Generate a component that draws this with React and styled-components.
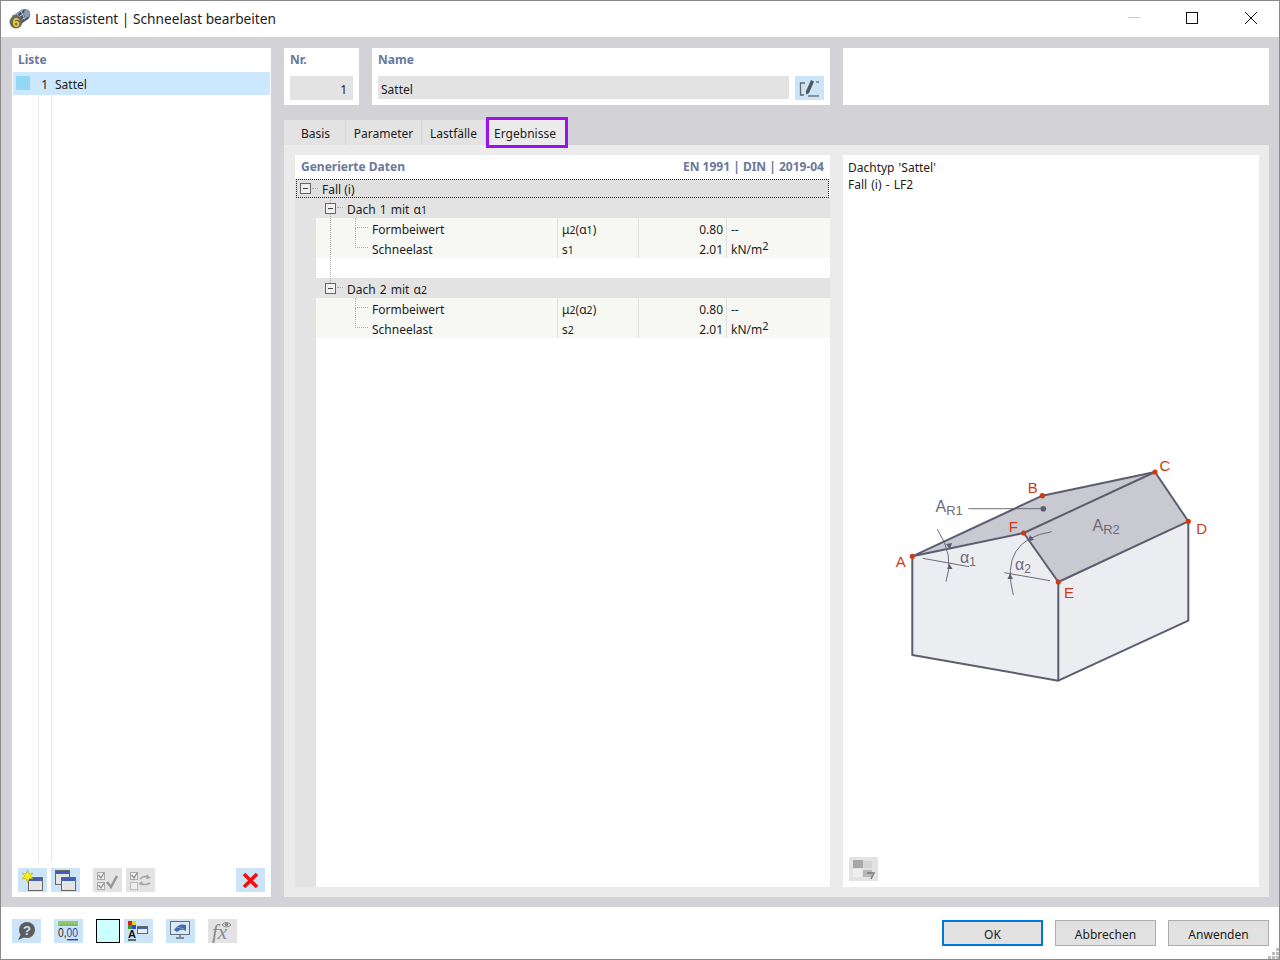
import React from 'react';
import styled, { createGlobalStyle } from 'styled-components';

const GlobalStyle = createGlobalStyle`
    html, body {
        margin: 0;
        padding: 0;
        background: #fff;
    }
    body {
        font-family: 'Noto Sans', 'Liberation Sans', sans-serif;
        font-size: 12px;
        color: #1c1c1c;
    }
`;

const HEADING = '#69789b';
const BLUE_BTN = '#cce4f7';
const GREY_BTN = '#e3e3e3';

const Small = styled.span`
    font-size: 10.5px;
`;

const Sup = styled.sup`
    font-size: 11px;
    line-height: 0;
    vertical-align: 4px;
`;

function TitleIcon() {
    return (
        <svg width="22" height="22" viewBox="0 0 22 22">
            <path d="M3 8 L13 1.5 Q19 0 21 4.5 Q22 9 18.5 11.5 L9 18 Z" fill="#46536a" />
            <path d="M5 7.5 L14 2 M7 10.5 L17 4.500 M9.500 13.500 L19.500 7.500 M8 5.500 L12 14 M12 3 L16 11.500" stroke="#b5c3d4" strokeWidth="1" fill="none" />
            <ellipse cx="18" cy="5.500" rx="3" ry="4" fill="#8e9cb0" />
            <circle cx="7" cy="14" r="6.500" fill="#6b6a55" />
            <text x="7" y="18.500" fontSize="12.500" fontWeight="700" textAnchor="middle" fill="#f1cc3c" fontFamily="Liberation Sans">6</text>
        </svg>
    );
}

function StarWindowIcon() {
    return (
        <svg width="29" height="24" viewBox="0 0 29 24">
            <rect x="10.5" y="9.5" width="14" height="13" fill="#e4e4e4" stroke="#666" />
            <rect x="11" y="10" width="13" height="3" fill="#3f5fb0" />
            <path d="M9.5 2 L11 6 L15 5 L12.5 8 L15 11 L11.5 10.5 L9.5 14.5 L8 10.5 L4 11 L7 8 L4 5 L8 6 Z" fill="#f5ee1e" stroke="#a8a000" strokeWidth="0.5" />
        </svg>
    );
}

function WindowsIcon() {
    return (
        <svg width="29" height="24" viewBox="0 0 29 24">
            <rect x="4.5" y="2.5" width="14" height="14" fill="#e4e4e4" stroke="#666" />
            <rect x="5" y="3" width="13" height="3" fill="#3f5fb0" />
            <rect x="10.5" y="9.5" width="14" height="13" fill="#e4e4e4" stroke="#666" />
            <rect x="11" y="10" width="13" height="3" fill="#3f5fb0" />
        </svg>
    );
}

function CheckAllIcon() {
    return (
        <svg width="29" height="24" viewBox="0 0 29 24">
            <rect x="4.5" y="4.5" width="7" height="7" fill="#eee" stroke="#aaa" />
            <rect x="4.5" y="14.5" width="7" height="7" fill="#eee" stroke="#aaa" />
            <path d="M5.5 7 L8 10 L11 5 M5.5 17 L8 20 L11 15" stroke="#8a8a8a" strokeWidth="1.2" fill="none" />
            <path d="M14 14 L18 19 L24 8" stroke="#999" strokeWidth="2.6" fill="none" />
        </svg>
    );
}

function CheckSwapIcon() {
    return (
        <svg width="29" height="24" viewBox="0 0 29 24">
            <rect x="4.5" y="4.5" width="7" height="7" fill="#eee" stroke="#aaa" />
            <rect x="4.5" y="14.5" width="7" height="7" fill="#eee" stroke="#bbb" />
            <path d="M5.5 7 L8 10 L11 5" stroke="#8a8a8a" strokeWidth="1.2" fill="none" />
            <path d="M14 11 Q18 7 23 9 M14 15 Q19 18 24 15" stroke="#a5a5a5" strokeWidth="1.6" fill="none" />
            <path d="M21 6.5 L25 10 L20 11 Z M16 13 L12.500 16 L17 17.500 Z" fill="#a5a5a5" />
        </svg>
    );
}

function DeleteIcon() {
    return (
        <svg width="29" height="24" viewBox="0 0 29 24">
            <path d="M8 6 L21 19 M21 6 L8 19" stroke="#f40f0f" strokeWidth="3.6" fill="none" />
        </svg>
    );
}

function HelpIcon() {
    return (
        <svg width="29" height="24" viewBox="0 0 29 24">
            <circle cx="15" cy="11" r="8" fill="#5c5c5c" />
            <path d="M9 15 L6 21 L13 18 Z" fill="#5c5c5c" />
            <text x="15" y="15.5" fontSize="13" fontWeight="700" textAnchor="middle" fill="#cce4f7" fontFamily="Liberation Sans">?</text>
        </svg>
    );
}

function DecimalsIcon() {
    return (
        <svg width="29" height="24" viewBox="0 0 29 24">
            <rect x="4" y="2" width="20" height="5" fill="#8fc76a" />
            <path d="M7 5v2 M10 5v2 M13 5v2 M16 5v2 M19 5v2 M22 5v2" stroke="#5c8f3f" strokeWidth="0.7" />
            <text x="4" y="18" fontSize="12" fontFamily="Liberation Sans" fill="#222" textLength="20" lengthAdjust="spacingAndGlyphs">0,<tspan fill="#2b46a6">00</tspan></text>
            <rect x="13" y="20" width="11" height="1.4" fill="#2b46a6" />
        </svg>
    );
}

function ColorFontIcon() {
    return (
        <svg width="29" height="24" viewBox="0 0 29 24">
            <rect x="4" y="2" width="4" height="4" fill="#e21c1c" />
            <rect x="8" y="2" width="4" height="4" fill="#e8d81a" />
            <rect x="4" y="6" width="4" height="4" fill="#2ca02c" />
            <rect x="8" y="6" width="4" height="4" fill="#2050d0" />
            <text x="4" y="19" fontSize="11" fontWeight="700" fontFamily="Liberation Sans" fill="#111">A</text>
            <rect x="4" y="20" width="8" height="2" fill="#666" />
            <rect x="13.5" y="7.5" width="10" height="7" fill="#eee" stroke="#666" />
            <rect x="14" y="8" width="9" height="2" fill="#3f5fb0" />
        </svg>
    );
}

function MonitorIcon() {
    return (
        <svg width="29" height="24" viewBox="0 0 29 24">
            <rect x="4.5" y="2.5" width="19" height="13" fill="#dce8f2" stroke="#5f6f7f" />
            <path d="M8 11 Q13 4 20 6 L20 12 Q15 9 11 13 Z" fill="#3d6db0" />
            <path d="M11 8 L18 10" stroke="#8db0d8" strokeWidth="0.8" />
            <path d="M14 16v2 M10 19h8" stroke="#5f6f7f" strokeWidth="1.4" />
        </svg>
    );
}

function FormulaIcon() {
    return (
        <svg width="29" height="24" viewBox="0 0 29 24">
            <text x="4" y="20" fontSize="21" fontStyle="italic" fontFamily="Liberation Serif" fill="#8a8a8a">fx</text>
            <path d="M14 6 Q18.5 1 23 6 Q18.5 10 14 6 Z" fill="none" stroke="#8a8a8a" />
            <circle cx="18.5" cy="5.5" r="1.8" fill="#8a8a8a" />
        </svg>
    );
}

function PenIcon() {
    return (
        <svg width="29" height="24" viewBox="0 0 29 24">
            <path d="M10 7 H5.5 V19 H9" stroke="#666" strokeWidth="1.3" fill="none" />
            <path d="M13 20 H24" stroke="#666" strokeWidth="1.3" />
            <path d="M16 4 L19 5.5 L14 17 L11 18.5 L11 15 Z" fill="#555" />
            <path d="M21 6 H24" stroke="#666" strokeWidth="1.3" />
        </svg>
    );
}

function PreviewIcon() {
    return (
        <svg width="29" height="24" viewBox="0 0 29 24">
            <rect x="4" y="3" width="10" height="8" fill="#a8a8a8" />
            <rect x="14" y="4" width="9" height="7" fill="#d4d4d4" />
            <rect x="4" y="12" width="9" height="8" fill="#efefef" />
            <rect x="14" y="13" width="9" height="7" fill="#b8b8b8" />
            <path d="M18 16 L25 16 L22 22" stroke="#777" strokeWidth="1.4" fill="none" />
        </svg>
    );
}

function Sketch() {
    return (
        <svg width="340" height="245" viewBox="880 450 340 245">
            <path d="M912.3 556.3 L1023.7 533 L1058.3 582 V680.7 L912.3 655 Z" fill="#ecedf0" />
            <path d="M1058.3 582 L1188.3 521.3 V620.7 L1058.3 680.7 Z" fill="#ecedf0" />
            <path d="M912.3 556.3 L1042.3 495.7 L1155 472 L1023.7 533 Z" fill="#c9c9d1" />
            <path d="M1023.7 533 L1155 472 L1188.3 521.3 L1058.3 582 Z" fill="#c9c9d1" />
            <g stroke="#5d5d6f" strokeWidth="2" fill="none" strokeLinejoin="round">
                <path d="M912.3 556.3 L1042.3 495.7 L1155 472 L1188.3 521.3 L1058.3 582 L1023.7 533 L912.3 556.3" />
                <path d="M1023.7 533 L1155 472" />
                <path d="M912.3 556.3 V655 L1058.3 680.7 L1188.3 620.7 V521.3" />
                <path d="M1058.3 582 V680.7" />
            </g>
            <g stroke="#5d5d6f" strokeWidth="0.9" fill="none">
                <path d="M968.3 508.7 H1043.3" />
                <path d="M922.7 558.3 L969 566.7" />
                <path d="M1004.3 572.7 L1050 580.7" />
                <path d="M937.3 529.3 Q955 556 946 581.7" />
                <path d="M1051.7 531.7 Q999 540 1013.3 595" />
            </g>
            <g fill="#5d5d6f">
                <circle cx="1043.3" cy="508.7" r="2.8" />
                <path d="M946 544 L952 543 L950 549.5 Z" />
                <path d="M949.5 564 L947 569 L952.5 569 Z" />
                <path d="M1030 535 L1034 540 L1028 541 Z" />
                <path d="M1010 573.5 L1007.5 579 L1013 579 Z" />
            </g>
            <g fill="#cf3a10">
                <circle cx="912.3" cy="556.3" r="2.6" />
                <circle cx="1042.3" cy="495.7" r="2.6" />
                <circle cx="1155" cy="472" r="2.6" />
                <circle cx="1188.3" cy="521.3" r="2.6" />
                <circle cx="1058.3" cy="582" r="2.6" />
                <circle cx="1023.7" cy="533" r="2.6" />
            </g>
            <g fill="#cf3a10" fontFamily="Liberation Sans" fontSize="15" textAnchor="middle">
                <text x="900.7" y="567.3">A</text>
                <text x="1032.7" y="492.6">B</text>
                <text x="1165" y="471.3">C</text>
                <text x="1201.7" y="533.5">D</text>
                <text x="1069" y="598.2">E</text>
                <text x="1013.3" y="532.2">F</text>
            </g>
            <g fill="#6b6b7a" fontFamily="Liberation Sans" fontSize="16">
                <text x="935.5" y="512">A<tspan fontSize="13" dy="3">R1</tspan></text>
                <text x="1092.5" y="530.5">A<tspan fontSize="13" dy="3">R2</tspan></text>
                <text x="960" y="563">α<tspan fontSize="12" dy="3">1</tspan></text>
                <text x="1015" y="570">α<tspan fontSize="12" dy="3">2</tspan></text>
            </g>
        </svg>
    );
}

const results = [
    {
        id: 1,
        name: 'Dach 1 mit ',
        index: '1',
        rows: [
            { label: 'Formbeiwert', symbol: <>μ<Small>2</Small>(α<Small>1</Small>)</>, value: '0.80', unit: '--' },
            { label: 'Schneelast', symbol: <>s<Small>1</Small></>, value: '2.01', unit: <>kN/m<Sup>2</Sup></> },
        ],
    },
    {
        id: 2,
        name: 'Dach 2 mit ',
        index: '2',
        rows: [
            { label: 'Formbeiwert', symbol: <>μ<Small>2</Small>(α<Small>2</Small>)</>, value: '0.80', unit: '--' },
            { label: 'Schneelast', symbol: <>s<Small>2</Small></>, value: '2.01', unit: <>kN/m<Sup>2</Sup></> },
        ],
    },
];

function App() {
    return (
        <>
            <GlobalStyle />
            <Dialog>
                <TitleBar>
                    <TitleLogo><TitleIcon /></TitleLogo>
                    <TitleText>Lastassistent | Schneelast bearbeiten</TitleText>
                    <WinButton>
                        <svg width="12" height="12" viewBox="0 0 12 12"><path d="M0 5.5 H12" stroke="#c8c8c8" /></svg>
                    </WinButton>
                    <WinButton>
                        <svg width="12" height="12" viewBox="0 0 12 12"><rect x="0.5" y="0.5" width="11" height="11" fill="none" stroke="#111" /></svg>
                    </WinButton>
                    <WinButton>
                        <svg width="12" height="12" viewBox="0 0 12 12"><path d="M0 0 L12 12 M12 0 L0 12" stroke="#111" /></svg>
                    </WinButton>
                </TitleBar>

                <Main>
                    <ListPanel>
                        <ListTitle>Liste</ListTitle>
                        <ListBody>
                            <ListRow>
                                <Swatch />
                                <ListNumber>1</ListNumber>
                                <ListName>Sattel</ListName>
                            </ListRow>
                        </ListBody>
                        <ListToolbar>
                            <IconBtn $bg={BLUE_BTN}><StarWindowIcon /></IconBtn>
                            <IconBtn $bg={BLUE_BTN}><WindowsIcon /></IconBtn>
                            <IconBtn $bg={GREY_BTN} $ml="9px"><CheckAllIcon /></IconBtn>
                            <IconBtn $bg={GREY_BTN}><CheckSwapIcon /></IconBtn>
                            <IconBtn $bg={BLUE_BTN} $ml="auto"><DeleteIcon /></IconBtn>
                        </ListToolbar>
                    </ListPanel>

                    <RightColumn>
                        <TopRow>
                            <FieldPanel $width="75px">
                                <FieldLabel>Nr.</FieldLabel>
                                <FieldValue $align="right">1</FieldValue>
                            </FieldPanel>
                            <FieldPanel $width="458px">
                                <FieldLabel>Name</FieldLabel>
                                <NameLine>
                                    <FieldValue $short>Sattel</FieldValue>
                                    <IconBtn $bg={BLUE_BTN}><PenIcon /></IconBtn>
                                </NameLine>
                            </FieldPanel>
                            <BlankPanel />
                        </TopRow>

                        <Tabs>
                            <Tab $width="61px" $pl="2px">Basis</Tab>
                            <Tab $width="75px">Parameter</Tab>
                            <Tab $width="63px">Lastfälle</Tab>
                            <Tab $width="76px" $active>Ergebnisse</Tab>
                        </Tabs>

                        <TabPage>
                            <TreePanel>
                                <TreeHeader>
                                    <span>Generierte Daten</span>
                                    <span>EN 1991 | DIN | 2019-04</span>
                                </TreeHeader>
                                <TreeBody>
                                    <CaseRow>
                                        <Expander $left="3px" />
                                        <Dash $left="15px" />
                                        <CaseLabel>Fall (i)</CaseLabel>
                                    </CaseRow>
                                    {results.map((group, i) => (
                                        <Group key={group.id} $spaced={i > 0}>
                                            <RoofRow $stem={i === 0}>
                                                <Expander $left="30px" />
                                                <Dash $left="42px" />
                                                <RoofLabel>{group.name}α<Small>{group.index}</Small></RoofLabel>
                                            </RoofRow>
                                            {group.rows.map((row, j) => (
                                                <ValueRow key={row.label} $last={j === 1}>
                                                    <ValueName>{row.label}</ValueName>
                                                    <ValueCell>{row.symbol}</ValueCell>
                                                    <ValueCell $number>{row.value}</ValueCell>
                                                    <UnitCell>{row.unit}</UnitCell>
                                                </ValueRow>
                                            ))}
                                        </Group>
                                    ))}
                                </TreeBody>
                            </TreePanel>

                            <SketchPanel>
                                <SketchText>Dachtyp 'Sattel'<br />Fall (i) - LF2</SketchText>
                                <SketchFrame><Sketch /></SketchFrame>
                                <PreviewBtn $bg={GREY_BTN}><PreviewIcon /></PreviewBtn>
                            </SketchPanel>
                        </TabPage>
                    </RightColumn>
                </Main>

                <Footer>
                    <IconBtn $bg={BLUE_BTN}><HelpIcon /></IconBtn>
                    <IconBtn $bg={BLUE_BTN} $ml="9px"><DecimalsIcon /></IconBtn>
                    <ColorSquare />
                    <IconBtn $bg={BLUE_BTN}><ColorFontIcon /></IconBtn>
                    <IconBtn $bg={BLUE_BTN} $ml="9px"><MonitorIcon /></IconBtn>
                    <IconBtn $bg={GREY_BTN} $ml="9px"><FormulaIcon /></IconBtn>
                    <DialogButtons>
                        <DialogButton $primary>OK</DialogButton>
                        <DialogButton>Abbrechen</DialogButton>
                        <DialogButton>Anwenden</DialogButton>
                    </DialogButtons>
                    <Grip>
                        <svg width="12" height="12" viewBox="0 0 12 12" fill="#bdbdbd">
                            <rect x="8" y="0" width="3" height="3" />
                            <rect x="4" y="4" width="3" height="3" />
                            <rect x="8" y="4" width="3" height="3" />
                            <rect x="0" y="8" width="3" height="3" />
                            <rect x="4" y="8" width="3" height="3" />
                            <rect x="8" y="8" width="3" height="3" />
                        </svg>
                    </Grip>
                </Footer>
            </Dialog>
        </>
    );
}

const Dialog = styled.div`
    width: 1280px;
    height: 960px;
    box-sizing: border-box;
    border: 1px solid #8a8a8a;
    display: flex;
    flex-direction: column;
    overflow: hidden;
`;

const TitleBar = styled.div`
    height: 36px;
    box-sizing: border-box;
    flex: none;
    display: flex;
    align-items: center;
    padding: 0 0 2px 8px;
    background: #fff;
`;

const TitleLogo = styled.div`
    width: 22px;
    height: 22px;
    margin-right: 4px;
    margin-top: 2px;
`;

const TitleText = styled.div`
    flex: 1;
    font-size: 13.7px;
`;

const WinButton = styled.div`
    width: 58px;
    height: 34px;
    box-sizing: border-box;
    display: flex;
    align-items: center;
    justify-content: center;
    &:last-child {
        padding-left: 2px;
    }
`;

const Main = styled.div`
    flex: 1;
    min-height: 0;
    display: grid;
    grid-template-columns: 259px 985px;
    column-gap: 13px;
    padding: 11px 10px 10px 11px;
    background: #d2d2d7;
`;

const ListPanel = styled.div`
    background: #fff;
    padding: 0 1px;
    display: flex;
    flex-direction: column;
    min-height: 0;
`;

const ListTitle = styled.div`
    height: 24px;
    line-height: 23px;
    padding-left: 5px;
    font-weight: 700;
    color: ${HEADING};
`;

const ListBody = styled.div`
    flex: 1;
    background:
        linear-gradient(#e8e8e8, #e8e8e8) 25px 0 / 1px 100% no-repeat,
        linear-gradient(#e8e8e8, #e8e8e8) 38px 0 / 1px 100% no-repeat;
`;

const ListRow = styled.div`
    height: 23px;
    display: flex;
    align-items: flex-start;
    background: #cce8ff;
    padding-left: 3px;
    line-height: 25px;
`;

const Swatch = styled.div`
    width: 14px;
    height: 14px;
    margin-top: 4px;
    background: #93d7f7;
`;

const ListNumber = styled.span`
    width: 18px;
    margin-right: 7px;
    text-align: right;
`;

const ListName = styled.span`
    display: block;
`;

const ListToolbar = styled.div`
    flex: none;
    display: flex;
    gap: 4px;
    padding: 6px 5px 5px;
`;

const IconBtn = styled.div`
    width: 29px;
    height: 24px;
    flex: none;
    background: ${props => props.$bg};
    margin-left: ${props => props.$ml || '0'};
    svg {
        display: block;
    }
`;

const RightColumn = styled.div`
    display: flex;
    flex-direction: column;
    min-height: 0;
`;

const TopRow = styled.div`
    height: 57px;
    flex: none;
    display: flex;
    gap: 13px;
`;

const FieldPanel = styled.div`
    width: ${props => props.$width};
    box-sizing: border-box;
    flex: none;
    background: #fff;
    padding: 0 6px;
`;

const FieldLabel = styled.div`
    height: 28px;
    line-height: 23px;
    font-weight: 700;
    color: ${HEADING};
`;

const FieldValue = styled.div`
    height: ${props => props.$short ? '23px' : '24px'};
    line-height: 28px;
    padding: 0 6px 0 3px;
    background: #e3e3e3;
    text-align: ${props => props.$align || 'left'};
    flex: ${props => props.$short ? 1 : 'none'};
`;

const NameLine = styled.div`
    display: flex;
    gap: 6px;
`;

const BlankPanel = styled.div`
    flex: 1;
    background: #fff;
`;

const Tabs = styled.div`
    height: 25px;
    flex: none;
    margin-top: 15px;
    display: flex;
    gap: 1px;
`;

const Tab = styled.div`
    position: relative;
    width: ${props => props.$width};
    box-sizing: border-box;
    text-align: center;
    line-height: 28px;
    padding-left: ${props => props.$pl || '0'};
    padding-right: ${props => props.$active ? '4px' : '0'};
    margin-left: ${props => props.$active ? '3px' : '0'};
    background: ${props => props.$active ? '#ebebeb' : '#e3e3e3'};
    outline: ${props => props.$active ? '3px solid #9a12ee' : 'none'};
    z-index: ${props => props.$active ? 1 : 0};
`;

const TabPage = styled.div`
    flex: 1;
    min-height: 0;
    display: grid;
    grid-template-columns: 535px 416px;
    column-gap: 13px;
    padding: 10px 10px 10px 11px;
    background: #ebebeb;
`;

const TreePanel = styled.div`
    background: #fff;
    display: flex;
    flex-direction: column;
    min-height: 0;
`;

const TreeHeader = styled.div`
    height: 24px;
    flex: none;
    display: flex;
    justify-content: space-between;
    line-height: 23px;
    padding: 0 6px;
    font-weight: 700;
    color: ${HEADING};
`;

const TreeBody = styled.div`
    flex: 1;
    background: linear-gradient(#e3e3e3, #e3e3e3) 0 0 / 21px 100% no-repeat;
`;

const CaseRow = styled.div`
    position: relative;
    height: 19px;
    margin: 0 1px;
    box-sizing: border-box;
    border: 1px dotted #222;
    background: #e0e0e0;
`;

const Expander = styled.span`
    position: absolute;
    z-index: 2;
    left: ${props => props.$left};
    top: 3px;
    width: 11px;
    height: 11px;
    box-sizing: border-box;
    border: 1px solid #666;
    background: #f0f0f0;
    &::after {
        content: '';
        position: absolute;
        left: 2px;
        right: 2px;
        top: 4px;
        height: 1px;
        background: #444;
    }
`;

const Dash = styled.span`
    position: absolute;
    left: ${props => props.$left};
    top: 8px;
    width: 6px;
    border-top: 1px dotted #aaa;
`;

const CaseLabel = styled.span`
    position: absolute;
    left: 25px;
    top: 0;
    line-height: 19px;
`;

const Group = styled.div`
    margin-top: ${props => props.$spaced ? '20px' : '0'};
`;

const RoofRow = styled.div`
    position: relative;
    height: 20px;
    background: #e3e3e3;
    &::before {
        content: ${props => props.$stem ? "''" : 'none'};
        position: absolute;
        z-index: 1;
        left: 35px;
        top: 0;
        height: 85px;
        border-left: 1px dotted #aaa;
    }
    ${Expander} {
        top: 5px;
    }
    ${Dash} {
        top: 9px;
    }
`;

const RoofLabel = styled.span`
    position: absolute;
    left: 52px;
    top: 0;
    line-height: 24px;
    word-spacing: 1px;
`;

const ValueRow = styled.div`
    position: relative;
    height: 20px;
    margin-left: 21px;
    display: grid;
    grid-template-columns: 242px 81px 88px 1fr;
    grid-template-rows: 20px;
    background: #f7f8f3;
    line-height: 24px;
    &::before {
        content: '';
        position: absolute;
        left: 39px;
        top: ${props => props.$last ? '-10px' : '0'};
        width: 12px;
        height: ${props => props.$last ? '19px' : '9px'};
        border-left: 1px dotted #aaa;
        border-bottom: 1px dotted #aaa;
    }
`;

const ValueName = styled.div`
    padding-left: 56px;
    border-right: 1px solid #e0e0e0;
`;

const ValueCell = styled.div`
    padding: 0 3px 0 4px;
    border-right: 1px solid #e0e0e0;
    text-align: ${props => props.$number ? 'right' : 'left'};
`;

const UnitCell = styled.div`
    padding-left: 4px;
`;

const SketchPanel = styled.div`
    background: #fff;
    display: flex;
    flex-direction: column;
    min-height: 0;
`;

const SketchText = styled.div`
    padding: 4px 0 0 5px;
    line-height: 17px;
    word-spacing: 1px;
`;

const SketchFrame = styled.div`
    margin: 257px 0 0 37px;
    svg {
        display: block;
    }
`;

const PreviewBtn = styled(IconBtn)`
    margin: auto 0 6px 6px;
`;

const Footer = styled.div`
    position: relative;
    height: 52px;
    flex: none;
    box-sizing: border-box;
    display: flex;
    gap: 4px;
    padding: 12px 10px 0 11px;
    background: #fff;
`;

const ColorSquare = styled.div`
    width: 24px;
    height: 24px;
    box-sizing: border-box;
    margin-left: 9px;
    border: 1px solid #000;
    background: #ccffff;
`;

const DialogButtons = styled.div`
    margin-left: auto;
    margin-top: 1px;
    display: flex;
    gap: 12px;
`;

const DialogButton = styled.div`
    width: 101px;
    height: 26px;
    box-sizing: border-box;
    border: ${props => props.$primary ? '2px solid #0078d7' : '1px solid #adadad'};
    background: #e1e1e1;
    text-align: center;
    line-height: ${props => props.$primary ? '25px' : '27px'};
`;

const Grip = styled.div`
    position: absolute;
    right: 0;
    bottom: 0;
    width: 11px;
    height: 11px;
    svg {
        display: block;
    }
`;

export default App;
